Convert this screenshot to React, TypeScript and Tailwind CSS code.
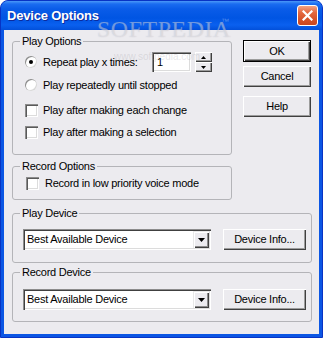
import React from "react";

const raised =
  "shadow-[inset_1px_1px_#ffffff,inset_-1px_-1px_#404040,inset_-2px_-2px_#9c9c9c]";

function Button({ label, def, className }: { label: string; def?: boolean; className: string }) {
  return (
    <div className={className}>
      <div
        className={
          def
            ? "w-full h-full border border-black"
            : "w-full h-full"
        }
      >
        <div className="w-full h-full bg-[#ecebef] shadow-[inset_1px_1px_#ffffff,inset_-1px_-1px_#404040,inset_-2px_-2px_#9c9c9c] flex items-center justify-center">
          {label}
        </div>
      </div>
    </div>
  );
}

function Radio({ checked }: { checked?: boolean }) {
  return (
    <div className="w-[12px] h-[12px] rounded-full bg-white shadow-[inset_1px_1px_#8c8c8c,inset_-1px_-1px_#d8d8d8] flex items-center justify-center shrink-0">
      {checked ? <div className="w-[4px] h-[4px] rounded-full bg-black" /> : null}
    </div>
  );
}

function Check() {
  return (
    <div className="w-[13px] h-[13px] bg-white shadow-[inset_1px_1px_#8c8c8c,inset_2px_2px_#5a5a5a,inset_-1px_-1px_#ffffff,inset_-2px_-2px_#dcdcdc] shrink-0" />
  );
}

function Combo() {
  return (
    <div className="w-[188px] h-[21px] bg-white flex items-center pl-[4px] pr-[2px] shadow-[inset_1px_1px_#8c8c8c,inset_2px_2px_#404040,inset_-1px_-1px_#ffffff,inset_-2px_-2px_#dcdcdc]">
      <span className="flex-1">Best Available Device</span>
      <div className="w-[16px] h-[17px] bg-[#ecebef] shadow-[inset_1px_1px_#e8e8e8,inset_2px_2px_#ffffff,inset_-1px_-1px_#404040,inset_-2px_-2px_#8c8c8c] flex items-center justify-center">
        <svg width="7" height="4" viewBox="0 0 7 4">
          <path d="M0 0H7L3.5 4Z" fill="#000" />
        </svg>
      </div>
    </div>
  );
}

function Group({
  label,
  className,
  children,
}: {
  label: string;
  className: string;
  children: React.ReactNode;
}) {
  return (
    <fieldset className={className}>
      <legend className="ml-[7px] px-[2px] leading-[12px]">{label}</legend>
      {children}
    </fieldset>
  );
}

export default function App() {
  return (
    <div className="w-[323px] h-[338px] relative font-['Liberation_Sans',Arial,sans-serif] text-[11px] tracking-[-0.25px] text-black select-none">
      <div className="w-full h-full flex flex-col rounded-t-[8px] overflow-hidden bg-[#0b56e4] border border-[#0833c4]">
        {/* Title bar */}
        <div className="h-[29px] shrink-0 flex items-center justify-between pl-[6px] pr-[4px] bg-[linear-gradient(180deg,#4a98f8_0px,#1a6cf0_3px,#0a5ce8_8px,#0055e3_17px,#0a60ef_24px,#0250da_29px)]">
          <span className="text-white font-bold text-[13px] tracking-[-0.2px] [text-shadow:1px_1px_#0c2b9c] mt-[1px]">
            Device Options
          </span>
          <div className="w-[21px] h-[21px] rounded-[3px] border border-white bg-[linear-gradient(180deg,#f3a283_0%,#e4683f_35%,#d5532a_70%,#c9461f_100%)] flex items-center justify-center">
            <svg width="11" height="11" viewBox="0 0 11 11">
              <path d="M1.5 1.5L9.5 9.5M9.5 1.5L1.5 9.5" stroke="#fff" strokeWidth="2.2" strokeLinecap="square" />
            </svg>
          </div>
        </div>

        {/* Client area */}
        <div className="flex-1 mx-[3px] mb-[3px] bg-[#ecebef] pl-[8px] pr-[7px] pt-[5px] flex flex-col">
          <div className="flex">
            <div className="w-[220px] flex flex-col">
              <Group label="Play Options" className="border border-[#b4b4b8] rounded-[3px] pb-[14px]">
                <div className="flex items-center h-[20px] mt-[5px] pl-[12px]">
                  <Radio checked />
                  <span className="ml-[6px] w-[109px]">Repeat play x times:</span>
                  <div className="w-[39px] h-[20px] bg-white flex items-center pl-[5px] shadow-[inset_1px_1px_#8c8c8c,inset_2px_2px_#404040,inset_-1px_-1px_#ffffff,inset_-2px_-2px_#dcdcdc]">
                    1
                  </div>
                  <div className="ml-[4px] w-[17px] h-[20px] flex flex-col">
                    <div className="h-[10px] bg-[#ecebef] shadow-[inset_1px_1px_#ffffff,inset_-1px_-1px_#404040,inset_-2px_-2px_#9c9c9c] flex items-center justify-center">
                      <svg width="5" height="3" viewBox="0 0 5 3">
                        <path d="M2.5 0L5 3H0Z" fill="#000" />
                      </svg>
                    </div>
                    <div className="h-[10px] bg-[#ecebef] shadow-[inset_1px_1px_#ffffff,inset_-1px_-1px_#404040,inset_-2px_-2px_#9c9c9c] flex items-center justify-center">
                      <svg width="5" height="3" viewBox="0 0 5 3">
                        <path d="M0 0H5L2.5 3Z" fill="#000" />
                      </svg>
                    </div>
                  </div>
                </div>
                <div className="flex items-center h-[16px] mt-[5px] pl-[12px]">
                  <Radio />
                  <span className="ml-[6px]">Play repeatedly until stopped</span>
                </div>
                <div className="flex items-center h-[16px] mt-[9px] pl-[12px]">
                  <Check />
                  <span className="ml-[5px]">Play after making each change</span>
                </div>
                <div className="flex items-center h-[16px] mt-[6px] pl-[12px]">
                  <Check />
                  <span className="ml-[5px]">Play after making a selection</span>
                </div>
              </Group>

              <Group label="Record Options" className="mt-[5px] border border-[#b4b4b8] rounded-[3px] pb-[8px]">
                <div className="flex items-center h-[16px] mt-[3px] pl-[13px]">
                  <Check />
                  <span className="ml-[6px]">Record in low priority voice mode</span>
                </div>
              </Group>
            </div>

            <div className="ml-[11px] w-[68px] flex flex-col pt-[5px]">
              <Button label="OK" def className="h-[22px]" />
              <Button label="Cancel" className="h-[21px] mt-[4px]" />
              <Button label="Help" className="h-[21px] mt-[9px]" />
            </div>
          </div>

          <Group label="Play Device" className="mt-[7px] border border-[#b4b4b8] rounded-[3px] pb-[12px]">
            <div className="flex items-center mt-[10px] pl-[10px]">
              <Combo />
              <Button label="Device Info..." className="ml-[12px] w-[83px] h-[21px]" />
            </div>
          </Group>

          <Group label="Record Device" className="mt-[3px] border border-[#b4b4b8] rounded-[3px] pb-[11px]">
            <div className="flex items-center mt-[11px] pl-[10px]">
              <Combo />
              <Button label="Device Info..." className="ml-[12px] w-[83px] h-[21px]" />
            </div>
          </Group>
        </div>
      </div>

      {/* Softpedia watermark overlay */}
      <div className="absolute left-[97px] top-[17px] font-['Liberation_Serif',serif] text-[24px] leading-[24px] tracking-[0.5px] text-white/35 [text-shadow:0_0_1px_rgba(120,120,140,0.35)] pointer-events-none">
        SOFTPEDIA
      </div>
      <div className="absolute left-[221px] top-[16px] font-['Liberation_Sans',sans-serif] text-[8px] text-white/30 pointer-events-none">
        ™
      </div>
      <div className="absolute left-[114px] top-[49px] text-[10px] tracking-[0px] text-[#9a9aa0]/25 pointer-events-none">
        www.softpedia.com
      </div>
    </div>
  );
}
